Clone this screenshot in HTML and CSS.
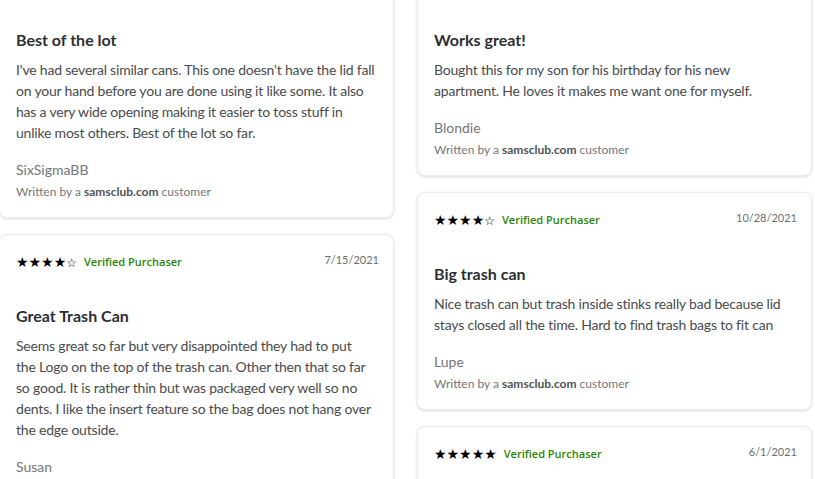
FILE: index.html
```html
<!DOCTYPE html>
<html lang="en">
<head>
<meta charset="utf-8">
<title>Reviews</title>
<link rel="stylesheet" href="styles.css">
</head>
<body>
<div class="reviews">
  <div class="col">
    <div class="card card-first">
      <h3 class="title">Best of the lot</h3>
      <p class="text">I've had several similar cans. This one doesn't have the lid fall on your hand before you are done using it like some. It also has a very wide opening making it easier to toss stuff in unlike most others. Best of the lot so far.</p>
      <div class="author">SixSigmaBB</div>
      <div class="source">Written by a <b>samsclub.com</b> customer</div>
    </div>
    <div class="card">
      <div class="meta">
        <span class="stars">★★★★<span class="empty">☆</span></span>
        <span class="verified">Verified Purchaser</span>
        <span class="date">7/15/2021</span>
      </div>
      <h3 class="title">Great Trash Can</h3>
      <p class="text">Seems great so far but very disappointed they had to put the&nbsp;Logo on the top of the trash can. Other then that so far so good. It is rather thin but was packaged very well so no dents. I like the insert feature so the bag does not hang over the edge outside.</p>
      <div class="author">Susan</div>
      <div class="source">Written by a <b>samsclub.com</b> customer</div>
    </div>
  </div>
  <div class="col">
    <div class="card card-first">
      <h3 class="title">Works great!</h3>
      <p class="text">Bought this for my son for his birthday for his new apartment. He loves it makes me want one for myself.</p>
      <div class="author">Blondie</div>
      <div class="source">Written by a <b>samsclub.com</b> customer</div>
    </div>
    <div class="card">
      <div class="meta">
        <span class="stars">★★★★<span class="empty">☆</span></span>
        <span class="verified">Verified Purchaser</span>
        <span class="date">10/28/2021</span>
      </div>
      <h3 class="title">Big trash can</h3>
      <p class="text">Nice trash can but trash inside stinks really bad because lid stays closed all the time. Hard to find trash bags to fit can</p>
      <div class="author">Lupe</div>
      <div class="source">Written by a <b>samsclub.com</b> customer</div>
    </div>
    <div class="card card-last">
      <div class="meta">
        <span class="stars">★★★★★</span>
        <span class="verified">Verified Purchaser</span>
        <span class="date">6/1/2021</span>
      </div>
    </div>
  </div>
</div>
</body>
</html>
```
FILE: styles.css
```css
html, body {
  margin: 0;
  padding: 0;
  background: #ffffff;
  overflow: hidden;
}
body {
  font-family: Lato, "Open Sans", sans-serif;
  color: #46474a;
}
.reviews {
  display: flex;
  align-items: flex-start;
  gap: 23px;
  margin: -41px 0 0 -1px;
}
.col {
  width: 395px;
  display: flex;
  flex-direction: column;
  gap: 16px;
}
.card {
  box-sizing: border-box;
  background: #fff;
  border: 1px solid #ececec;
  border-radius: 8px;
  box-shadow: 0 1px 3px rgba(0, 0, 0, 0.14);
  padding: 18px 15px 17px 16px;
}
.card-first {
  padding-top: 35px;
}
.card-last {
  min-height: 60px;
}
.meta {
  display: flex;
  align-items: center;
  height: 18px;
  line-height: 18px;
}
.stars {
  font-family: "DejaVu Sans", sans-serif;
  font-size: 14px;
  color: #000;
}
.empty {
  font-size: 12px;
}
.verified {
  margin-left: 7px;
  font-family: "Open Sans", sans-serif;
  font-weight: 600;
  font-size: 11px;
  color: #2a8703;
}
.date {
  margin-left: auto;
  margin-right: -1px;
  margin-top: -4px;
  font-size: 11px;
  color: #6d6e71;
}
.title {
  margin: 35px 0 0 0;
  font-size: 16px;
  line-height: 20px;
  font-weight: 700;
  color: #2e2f32;
}
.text {
  margin: 9px 0 0 0;
  font-size: 14px;
  line-height: 21px;
  letter-spacing: -0.2px;
  color: #4a4b4e;
}
.author {
  margin-top: 17px;
  font-size: 14px;
  line-height: 20px;
  color: #74767c;
}
.source {
  margin-top: 4px;
  font-size: 12px;
  line-height: 16px;
  color: #74767c;
}
.source b {
  font-weight: 700;
  color: #515357;
}
```
